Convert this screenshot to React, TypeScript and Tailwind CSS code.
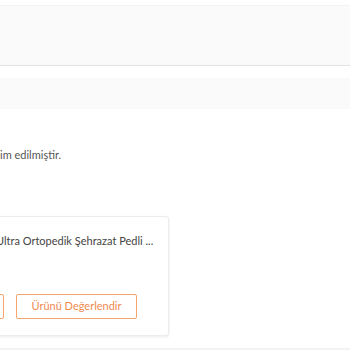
import React from "react";

export default function App() {
  return (
    <div
      className="w-[350px] h-[350px] overflow-hidden bg-white flex flex-col"
      style={{ fontFamily: 'Lato, "Open Sans", sans-serif' }}
    >
      <div className="h-[5px] shrink-0" />
      <div className="h-[61px] shrink-0 bg-[#fafafa] border-t border-b border-t-[#f2f2f2] border-b-[#e4e4e4]" />
      <div className="h-[12px] shrink-0" />
      <div className="h-[31px] shrink-0 bg-[#fafafa]" />
      <div className="h-[38px] shrink-0" />
      <div className="text-[11px] leading-[16px] text-[#555] whitespace-nowrap">im edilmiştir.</div>
      <div className="h-[53px] shrink-0" />
      <div className="ml-[-200px] w-[369px] h-[120px] shrink-0 bg-white border border-[#ececec] rounded-[3px] shadow-[0_1px_3px_rgba(0,0,0,0.08)] flex flex-col">
        <div className="h-[16px] shrink-0" />
        <div className="pl-[195px] text-[11px] leading-[16px] text-[#444] whitespace-nowrap">
          Ultra Ortopedik Şehrazat Pedli ...
        </div>
        <div className="h-[45px] shrink-0" />
        <div className="flex gap-[12px] pl-[80px]">
          <div className="w-[123px] h-[25px] border border-[#f3a56c] rounded-[2px]" />
          <div className="w-[121px] h-[25px] border border-[#f3a56c] rounded-[2px] flex items-center justify-center text-[11px] text-[#ef8a50] whitespace-nowrap">
            Ürünü Değerlendir
          </div>
        </div>
      </div>
      <div className="h-[12px] shrink-0" />
      <div className="flex-1 bg-[#f3f3f3]" />
    </div>
  );
}
